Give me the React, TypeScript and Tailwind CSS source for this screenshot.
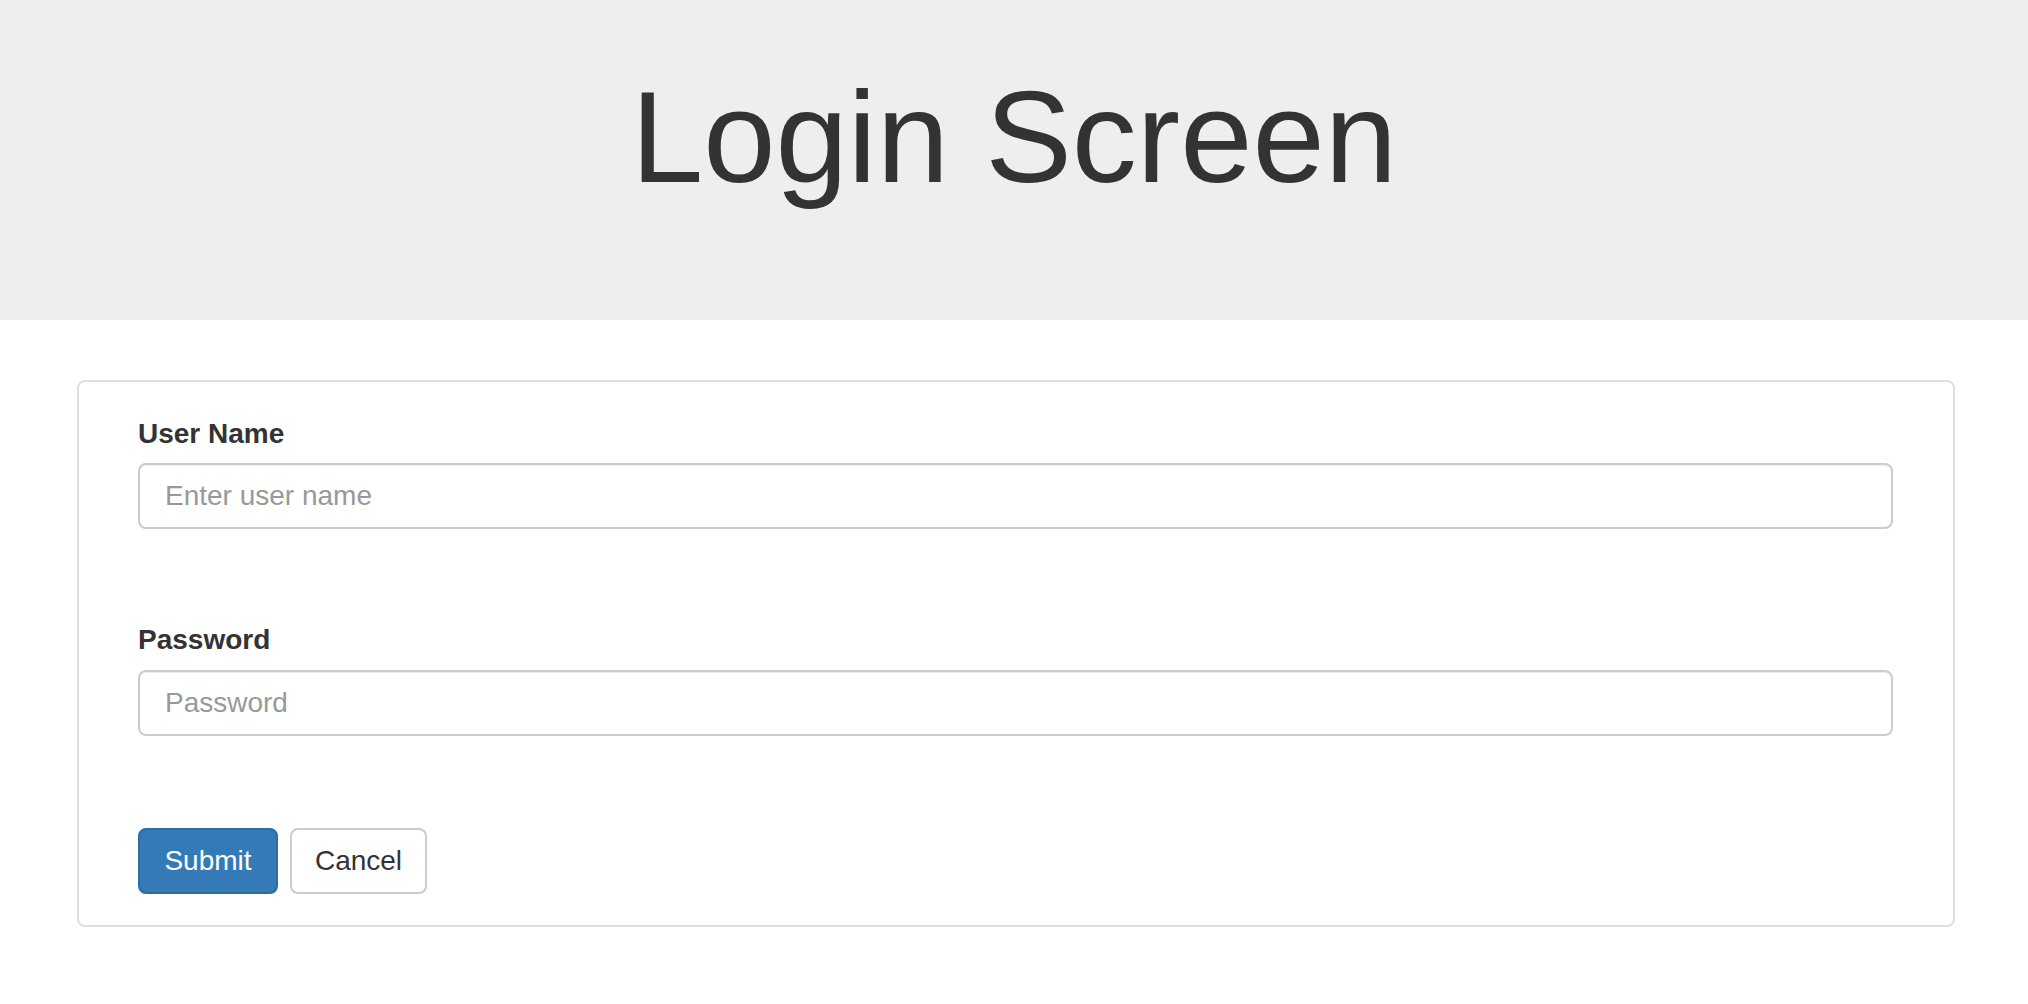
import React from 'react';

const LoginScreen: React.FC = () => {
  return (
    <div className="min-h-screen bg-white font-['Liberation_Sans',Arial,sans-serif] text-[#333]">
      {/* Header */}
      <header className="h-[320px] bg-[#eeeeee] pt-[66px] text-center">
        <h1 className="text-[130px] leading-[1.1] font-normal text-[#333]">Login Screen</h1>
      </header>

      {/* Form card */}
      <main className="pt-[60px]">
        <form
          className="ml-[77px] mr-[73px] rounded-[8px] border-2 border-[#dfdfdf] pl-[59px] pr-[60px] pt-[33px] pb-[31px]"
          onSubmit={e => e.preventDefault()}
        >
          <div className="mb-[92px]">
            <label className="block mb-[10px] text-[28px] leading-[38px] font-bold text-[#333]">User Name</label>
            <input
              type="text"
              placeholder="Enter user name"
              className="block w-full h-[66px] rounded-[8px] border-2 border-[#cccccc] px-[25px] text-[28px] text-[#555] placeholder:text-[#999] shadow-[inset_0_1px_1px_rgba(0,0,0,0.075)] outline-none"
            />
          </div>

          <div className="mb-[92px]">
            <label className="block mb-[11px] text-[28px] leading-[38px] font-bold text-[#333]">Password</label>
            <input
              type="password"
              placeholder="Password"
              className="block w-full h-[66px] rounded-[8px] border-2 border-[#cccccc] px-[25px] text-[28px] text-[#555] placeholder:text-[#999] shadow-[inset_0_1px_1px_rgba(0,0,0,0.075)] outline-none"
            />
          </div>

          <div className="flex gap-[12px]">
            <button
              type="submit"
              className="h-[66px] w-[140px] rounded-[8px] border-2 border-[#2e6da4] bg-[#337ab7] text-[28px] text-white"
            >
              Submit
            </button>
            <button
              type="button"
              className="h-[66px] w-[137px] rounded-[8px] border-2 border-[#cccccc] bg-white text-[28px] text-[#333]"
            >
              Cancel
            </button>
          </div>
        </form>
      </main>
    </div>
  );
};

export default LoginScreen;
